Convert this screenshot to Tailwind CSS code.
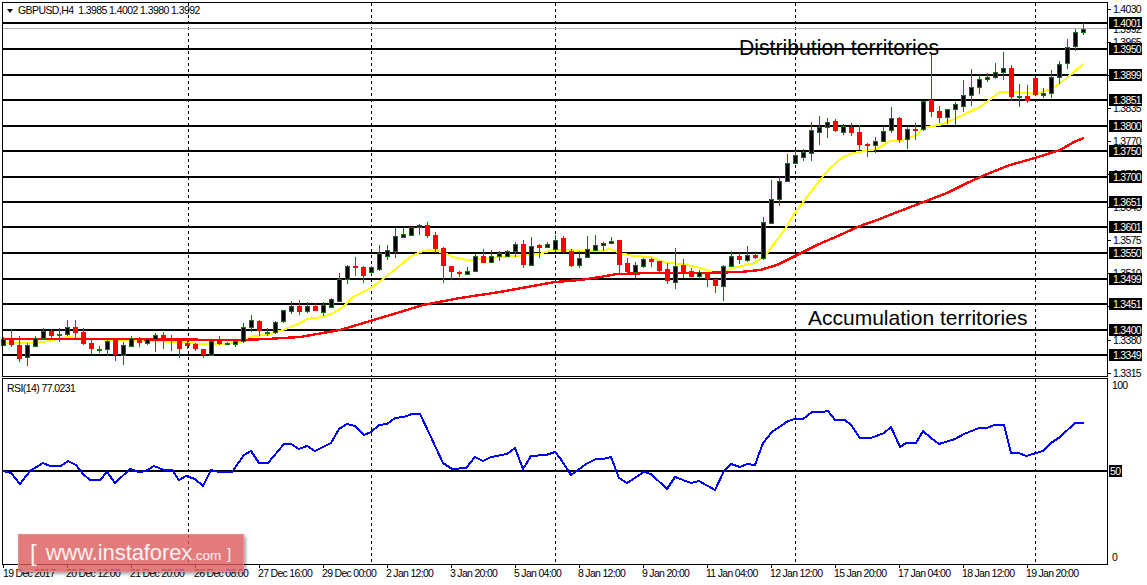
<!DOCTYPE html>
<html lang="en">
<head>
<meta charset="UTF-8">
<title>GBPUSD,H4</title>
<script src="https://cdn.jsdelivr.net/npm/@tailwindcss/browser@4"></script>
</head>
<body class="relative w-[1147px] h-[585px] overflow-hidden bg-white text-black font-['Liberation_Sans',sans-serif]">

<!-- price panel -->
<div class="flex h-[377px]">
  <div class="relative w-[1108px]">
    <svg id="plot" width="1108" height="377" viewBox="0 0 1108 377" shape-rendering="crispEdges"></svg>
    <div class="absolute left-[7px] top-[9px] w-0 h-0 border-x-[3.5px] border-x-transparent border-t-[4px] border-t-black"></div>
    <span class="absolute left-[18px] top-[4px] text-[10.5px] leading-[12px] tracking-[-0.58px] whitespace-pre">GBPUSD,H4  1.3985 1.4002 1.3980 1.3992</span>
    <span class="absolute left-[739px] top-[36px] text-[21.2px] leading-[24px] whitespace-pre">Distribution territories</span>
    <span class="absolute left-[808px] top-[306px] text-[21px] leading-[24px] whitespace-pre">Accumulation territories</span>
  </div>
  <svg id="priceAxis" width="39" height="377" viewBox="1108 0 39 377" shape-rendering="crispEdges" class="overflow-visible tracking-[-0.7px]"></svg>
</div>

<!-- rsi panel -->
<div class="flex h-[188px]">
  <div class="relative w-[1108px]">
    <svg id="rsi" width="1108" height="188" viewBox="0 377 1108 188" shape-rendering="crispEdges"></svg>
    <span class="absolute left-[7px] top-[5px] text-[10.5px] leading-[12px] tracking-[-0.58px]">RSI(14) 77.0231</span>
  </div>
  <svg id="rsiAxis" width="39" height="188" viewBox="1108 377 39 188" shape-rendering="crispEdges" class="tracking-[-0.7px]"></svg>
</div>

<!-- time axis -->
<svg id="timeAxis" width="1147" height="20" viewBox="0 565 1147 20" shape-rendering="crispEdges" class="tracking-[-0.7px]"></svg>

<!-- watermark -->
<div class="absolute left-[18px] top-[534px] w-[226px] h-[38px] flex items-center gap-[9px] pl-[11px] bg-[#dc5a5d]/80 border border-[#e98a8c] shadow-[2px_2px_3px_rgba(0,0,0,0.35)] text-white/90">
  <span class="text-[24px] leading-none font-light">[</span>
  <span class="text-[22px] leading-none tracking-[-0.1px]">www.instaforex<span class="text-[13.5px]">.com</span><span class="text-[15px] ml-[6px] align-[1px]">]</span></span>
</div>

<script>
// [up?, high, bodyTop, bodyBottom, low], read off the chart in pixels, x = 3 + 8 * index
var bars = [
[1,337,339,345,345],[0,329,339,345,347],[0,336,345,359,362],[1,343,345,357,366],[1,336,338,346,347],
[1,328,331,338,339],[0,329,331,336,339],[1,328,334,335,342],[1,320,327,334,336],[0,320,327,333,338],
[0,328,332,344,345],[0,338,343,349,354],[1,346,349,350,353],[1,338,341,349,356],[0,338,340,355,361],
[1,342,345,355,365],[1,336,338,346,347],[0,337,338,343,347],[1,338,339,343,345],[1,333,335,339,352],
[0,332,335,339,349],[0,335,338,339,351],[0,338,339,349,358],[0,341,343,346,349],[0,343,344,349,351],
[0,349,349,355,358],[1,339,341,355,356],[0,336,339,344,345],[1,342,343,344,345],[1,339,341,344,347],
[1,323,327,341,343],[1,315,320,327,332],[0,320,321,331,336],[1,328,332,333,336],[1,321,322,332,334],
[1,310,310,321,323],[1,301,306,311,314],[0,300,306,312,315],[1,302,306,311,313],[0,303,306,311,311],
[1,302,305,312,316],[1,298,299,307,308],[1,273,279,301,301],[1,265,266,279,284],[0,257,266,268,276],
[0,266,267,276,283],[1,266,267,272,274],[1,245,253,269,271],[1,245,250,256,260],[1,228,236,251,258],
[1,228,234,237,238],[1,227,227,235,235],[1,224,225,227,235],[0,222,225,236,238],[0,232,235,249,253],
[0,247,248,266,283],[0,266,266,272,279],[0,271,272,274,277],[1,267,271,274,274],[1,254,256,271,272],
[0,249,256,263,263],[1,250,256,262,263],[1,251,253,256,261],[1,250,251,256,257],[1,242,244,251,257],
[0,240,244,265,268],[1,237,246,265,266],[0,244,245,248,258],[1,242,244,247,247],[1,235,240,249,251],
[0,236,238,252,253],[0,249,251,266,267],[1,251,258,265,268],[1,236,249,257,258],[1,235,245,250,251],
[1,242,243,245,251],[1,237,241,243,243],[0,240,240,265,273],[0,258,263,272,273],[1,262,265,272,278],
[1,258,259,266,268],[0,258,259,262,267],[0,261,261,271,274],[0,263,269,281,284],[1,248,266,282,289],
[0,259,265,273,278],[0,268,271,277,277],[1,270,272,276,279],[0,272,273,279,287],[0,279,279,286,293],
[1,265,266,286,301],[1,251,256,266,267],[0,253,256,260,264],[1,246,255,260,262],[0,253,255,258,259],
[1,217,222,258,260],[1,180,199,223,224],[1,177,181,199,206],[1,154,163,181,182],[1,150,155,163,163],
[1,149,152,157,161],[1,122,130,153,161],[1,116,127,132,145],[1,118,122,127,138],[0,119,121,131,132],
[1,124,126,132,135],[0,123,127,133,136],[0,125,132,145,150],[0,143,144,146,157],[1,137,141,145,153],
[1,127,131,141,142],[1,107,118,130,133],[0,117,118,140,143],[1,127,129,139,149],[0,123,129,131,140],
[1,101,101,129,131],[0,53,100,112,117],[0,106,111,118,123],[1,109,109,117,124],[1,102,104,109,125],
[1,80,95,106,112],[1,69,87,95,106],[1,75,79,87,94],[1,73,77,79,82],[1,63,72,77,79],
[1,52,68,72,80],[0,65,68,97,101],[1,84,96,97,107],[0,85,96,101,103],[0,78,78,95,95],
[1,88,93,95,98],[1,70,77,93,98],[1,61,64,77,84],[1,39,47,63,69],[1,29,32,46,51],[1,23,29,32,35]
];

var yellow = "3,343 33,343 50,341 67,337 90,339 117,340 150,341 180,342 200,344 227,344 240,342 253,336 267,335 283,330 300,323 307,319 323,317 333,313 343,307 353,297 371,288 383,279 397,268 410,257 420,252 428,250 443,252 453,257 467,260 483,259 500,257 520,256 539,254 553,250 567,250 583,251 600,251 610,249 620,253 633,256 650,257 667,263 683,264 700,268 713,272 723,272 733,268 755,263 767,253 777,240 787,226 795,213 807,197 820,180 830,168 843,157 853,153 877,149 890,141 900,141 917,135 923,128 943,124 963,115 980,107 1000,92 1013,92 1037,94 1053,88 1067,78 1083,64";
var red = "3,339 100,339 240,340 267,339 283,338 300,337 340,330 377,319 397,313 423,305 460,298 500,292 533,286 555,282 580,280 600,277 617,274 650,273 700,273 740,272 760,270 777,265 795,256 817,245 840,235 860,226 880,219 900,211 947,193 967,183 987,174 1010,165 1035,158 1060,150 1074,142 1084,138";
var rsiLine = "3,471 11,473 20,484 30,471 43,463 50,466 61,466 68,461 76,465 83,474 90,480 100,480 107,472 115,483 130,469 139,472 146,471 154,466 164,470 172,470 179,480 186,476 195,479 203,486 211,470 219,472 232,472 244,455 251,451 259,463 268,463 284,444 291,444 299,449 307,446 315,451 331,443 339,429 347,424 355,426 364,435 371,432 379,425 387,424 395,418 404,417 412,414 420,414 430,435 443,463 452,469 466,468 475,457 483,461 491,457 507,454 515,448 523,469 531,456 546,455 555,452 560,458 571,475 586,464 596,459 603,459 611,457 619,478 627,483 644,472 651,474 667,489 675,477 691,483 699,481 715,490 724,471 731,464 740,467 747,464 755,465 763,443 772,432 788,421 795,419 803,419 812,412 822,412 828,411 835,420 845,420 851,425 860,438 871,438 884,433 891,427 900,447 906,443 916,443 923,431 931,438 939,444 955,439 964,434 979,428 987,428 994,425 1004,425 1011,453 1019,453 1026,456 1043,451 1051,443 1060,437 1075,423 1084,423";

var levels = [[23,"1.4001"],[49,"1.3950"],[75,"1.3899"],[100,"1.3851"],[126,"1.3800"],[151,"1.3750"],[177,"1.3700"],[202,"1.3651"],[227,"1.3601"],[253,"1.3550"],[279,"1.3499"],[304,"1.3451"],[330,"1.3400"],[355,"1.3349"]];
var scale = [[9,"1.4030"],[42,"1.3965"],[75,"1.3900"],[108,"1.3835"],[141,"1.3770"],[174,"1.3705"],[207,"1.3640"],[240,"1.3575"],[273,"1.3510"],[306,"1.3445"],[340,"1.3380"],[373,"1.3315"]];
var times = ["19 Dec 2017","20 Dec 12:00","21 Dec 20:00","26 Dec 08:00","27 Dec 16:00","29 Dec 00:00","2 Jan 12:00","3 Jan 20:00","5 Jan 04:00","8 Jan 12:00","9 Jan 20:00","11 Jan 04:00","12 Jan 12:00","15 Jan 20:00","17 Jan 04:00","18 Jan 12:00","19 Jan 20:00"];
var verticals = [188, 371, 555, 795, 1035];

function rect(x, y, w, h, c) {
  return '<rect x="' + x + '" y="' + y + '" width="' + w + '" height="' + h + '" fill="' + c + '"/>';
}
function text(x, y, s, c) {
  return '<text x="' + x + '" y="' + y + '" font-size="10.5" fill="' + (c || '#000') + '" shape-rendering="auto">' + s + '</text>';
}
function dashes(x, y1, y2) {
  return '<line x1="' + (x + 0.5) + '" y1="' + y1 + '" x2="' + (x + 0.5) + '" y2="' + y2 + '" stroke="#000" stroke-dasharray="3 3"/>';
}
function curve(points, c, w) {
  return '<polyline points="' + points + '" fill="none" stroke="' + c + '" stroke-width="' + w + '"/>';
}

// price plot
var p = rect(0, 0, 1108, 377, '#fff');
verticals.forEach(function (x) { p += dashes(x, 3, 376); });
p += rect(3, 28, 1104, 1, '#b4b4b4');
levels.forEach(function (l) { p += rect(3, l[0] - 1, 1104, 2, '#000'); });
p += curve(yellow, '#ffff00', 2) + curve(red, '#ff0000', 2.4);
bars.forEach(function (b, i) {
  var x = 3 + 8 * i, col = b[0] ? '#067a06' : '#ff0000', h = Math.max(b[3] - b[2], 1);
  p += rect(x, b[1], 1, b[4] - b[1], col);
  p += rect(x - 2, b[2], 5, h + (b[0] ? 1 : 0), col);
  if (b[0] && h > 1) p += rect(x - 1, b[2] + 1, 3, h - 1, '#000');
});
p += rect(2, 2, 1105, 1, '#000') + rect(2, 2, 1, 375, '#000') + rect(2, 376, 1106, 1, '#000') + rect(1107, 2, 1, 375, '#000');
document.getElementById('plot').innerHTML = p;

// price scale with the level tags over it
var a = '';
scale.forEach(function (s) {
  a += rect(1108, s[0], 3, 1, '#000') + text(1113, s[0] + 4, s[1]);
});
a += text(1113, 33, '1.3992');
levels.forEach(function (l) {
  a += rect(1109, l[0] - 6, 33, 12, '#000') + text(1113, l[0] + 4, l[1], '#fff');
});
document.getElementById('priceAxis').innerHTML = a;

// rsi plot
var r = '';
verticals.forEach(function (x) { r += dashes(x, 379, 564); });
r += rect(3, 470, 1104, 2, '#000');
r += curve(rsiLine, '#0000ff', 2);
r += rect(2, 378, 1105, 1, '#000') + rect(2, 378, 1, 187, '#000') + rect(2, 564, 1106, 1, '#000') + rect(1107, 378, 1, 187, '#000');
document.getElementById('rsi').innerHTML = r;

document.getElementById('rsiAxis').innerHTML =
  text(1112, 389, '100') + rect(1109, 465, 13, 12, '#000') + text(1110, 475, '50', '#fff') + text(1112, 561, '0');

// time scale
var t = '';
times.forEach(function (s, i) {
  var x = 3 + 64 * i;
  t += rect(x, 565, 1, 3, '#000') + text(i ? x - 1 : x, 577, s);
});
document.getElementById('timeAxis').innerHTML = t;
</script>
</body>
</html>
